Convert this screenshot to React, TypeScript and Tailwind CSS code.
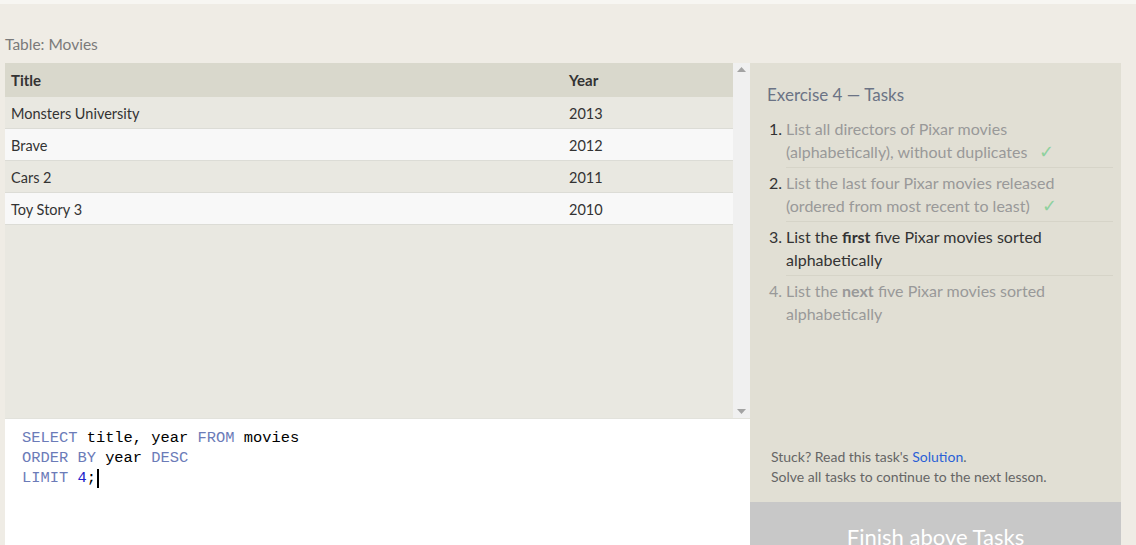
import React from 'react';

const rows = [
  { title: 'Monsters University', year: 2013 },
  { title: 'Brave', year: 2012 },
  { title: 'Cars 2', year: 2011 },
  { title: 'Toy Story 3', year: 2010 },
];

function Check() {
  return <span className="ml-3 text-[18px] text-[#8fd19e]">✓</span>;
}

function TaskItem({
  num,
  faded,
  last,
  children,
}: {
  num: number;
  faded?: boolean;
  last?: boolean;
  children: React.ReactNode;
}) {
  return (
    <li className="flex">
      <span
        className={`w-[19px] shrink-0 text-right pr-[4px] pt-[3px] ${
          num === 4 ? 'text-[#999]' : 'text-[#333]'
        }`}
      >
        {num}.
      </span>
      <div
        className={`flex-1 pt-[3px] pb-[4px] ${last ? '' : 'border-b border-[#d6d4c8]'} ${
          faded ? 'text-[#999]' : 'text-[#333]'
        }`}
      >
        {children}
      </div>
    </li>
  );
}

export default function App() {
  return (
    <div className="w-[1136px] h-[545px] overflow-hidden bg-[#efece5] font-['Lato','Open_Sans',sans-serif]">
      <div className="h-[4px] bg-[#f7f6f2]" />
      <div className="pl-[5px] pr-[15px]">
        <div className="pt-[29px] h-[59px] text-[15.5px] text-[#7a7a7a]">Table: Movies</div>
        <div className="flex h-[482px]">
          {/* left column */}
          <div className="w-[745px] flex flex-col">
            <div className="flex h-[355px] bg-[#e9e8e1]">
              <div className="flex-1">
                <div className="flex h-[34px] items-center bg-[#d9d8cc] text-[15px] font-bold text-[#333]">
                  <div className="w-[564px] pl-[6px]">Title</div>
                  <div>Year</div>
                </div>
                {rows.map((r, i) => (
                  <div
                    key={r.title}
                    className={`flex h-[32px] items-center pt-[2px] text-[14.5px] text-[#333] border-b border-[#dcdcd6] ${
                      i % 2 === 0 ? 'bg-[#e9e8e1]' : 'bg-[#f8f8f8]'
                    }`}
                  >
                    <div className="w-[564px] pl-[6px]">{r.title}</div>
                    <div>{r.year}</div>
                  </div>
                ))}
              </div>
              <div className="w-[17px] bg-[#f0f0f0] flex flex-col justify-between items-center py-[4px]">
                <svg width="9" height="5" viewBox="0 0 9 5">
                  <path d="M4.5 0 L9 5 L0 5 Z" fill="#a3a3a3" />
                </svg>
                <svg width="9" height="5" viewBox="0 0 9 5">
                  <path d="M0 0 L9 0 L4.5 5 Z" fill="#a3a3a3" />
                </svg>
              </div>
            </div>
            <div className="flex-1 bg-white border-t border-[#e2e2dc] pl-[17px] pt-[9px] font-['Liberation_Mono',monospace] text-[15.4px] leading-[20px] text-black">
              <div>
                <span className="text-[#6b7bb8]">SELECT</span> title, year{' '}
                <span className="text-[#6b7bb8]">FROM</span> movies
              </div>
              <div>
                <span className="text-[#6b7bb8]">ORDER BY</span> year{' '}
                <span className="text-[#6b7bb8]">DESC</span>
              </div>
              <div className="flex items-center">
                <span className="text-[#6b7bb8]">LIMIT</span>&nbsp;
                <span className="text-[#2222cc]">4</span>;
                <span className="inline-block w-[2px] h-[19px] bg-black ml-[1px]" />
              </div>
            </div>
          </div>
          {/* right column */}
          <div className="w-[371px] flex flex-col bg-[#e1dfd4]">
            <div className="flex-1 pl-[17px] pr-[8px] pt-[19px]">
              <div className="text-[17px] text-[#6b7385]">Exercise 4 — Tasks</div>
              <ol className="mt-[6px] text-[16px] leading-[23px]">
                <TaskItem num={1} faded>
                  List all directors of Pixar movies
                  <br />
                  (alphabetically), without duplicates
                  <Check />
                </TaskItem>
                <TaskItem num={2} faded>
                  List the last four Pixar movies released
                  <br />
                  (ordered from most recent to least)
                  <Check />
                </TaskItem>
                <TaskItem num={3}>
                  List the <b>first</b> five Pixar movies sorted
                  <br />
                  alphabetically
                </TaskItem>
                <TaskItem num={4} faded last>
                  List the <b>next</b> five Pixar movies sorted
                  <br />
                  alphabetically
                </TaskItem>
              </ol>
            </div>
            <div className="pl-[21px] pb-[15px] text-[14px] leading-[20px] text-[#666]">
              <div>
                Stuck? Read this task's <span className="text-[#2a5fd6]">Solution</span>.
              </div>
              <div>Solve all tasks to continue to the next lesson.</div>
            </div>
            <div className="h-[43px] bg-[#c8c8c8] flex justify-center pt-[20px] text-[22px] leading-[30px] text-white">
              Finish above Tasks
            </div>
          </div>
        </div>
      </div>
    </div>
  );
}
